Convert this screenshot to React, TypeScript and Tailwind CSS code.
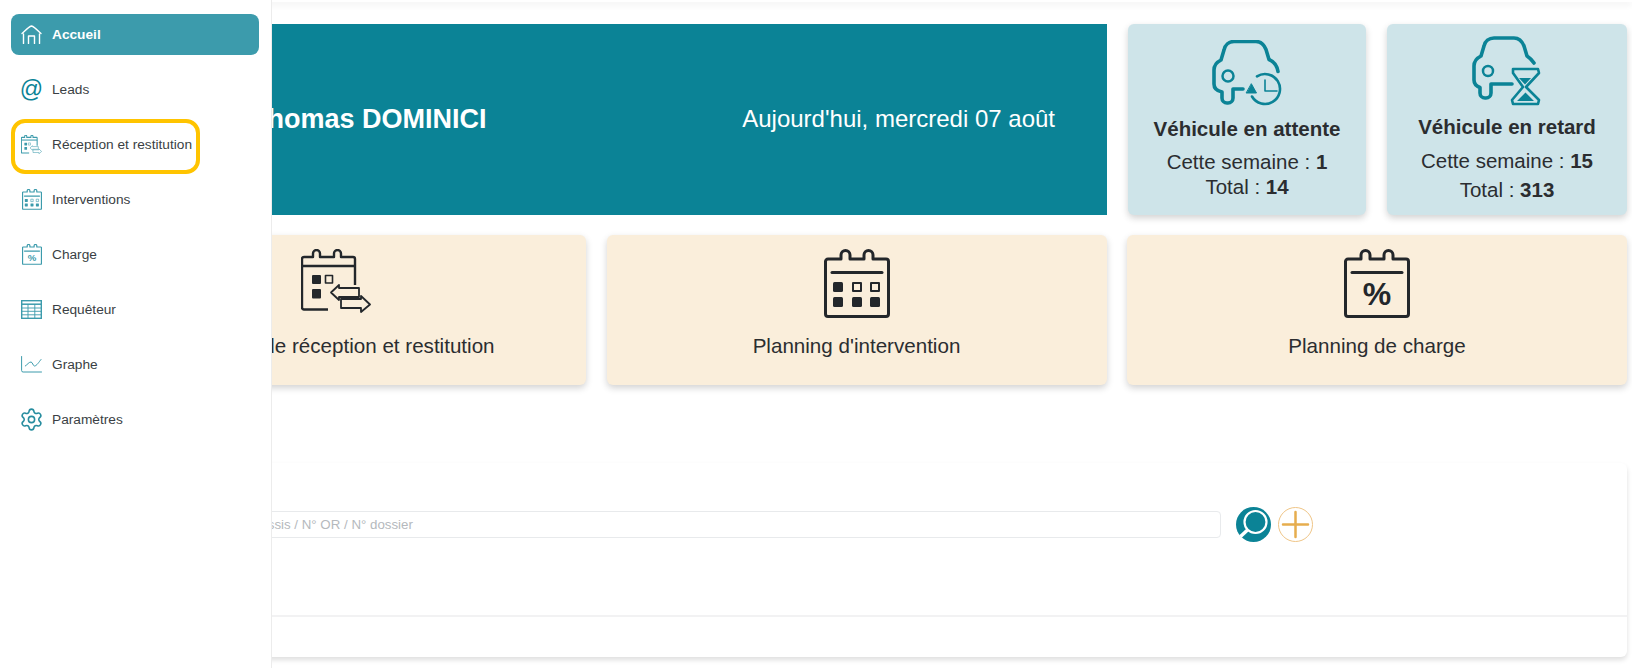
import type { ReactNode } from "react";
import { Settings } from "lucide-react";

const TEAL = "#0b8396";
const SIDE = "#3c9bac";
const INK = "#23272b";

type IconProps = { className?: string; stroke?: string; weight?: number };

function CalendarFrame({ stroke = INK, weight = 3, className, children }: IconProps & { children?: ReactNode }) {
  return (
    <svg viewBox="0 0 66 70" className={className} fill="none" stroke={stroke} strokeWidth={weight} strokeLinejoin="round">
      <path d="M4 10h13V6a4.5 4.5 0 0 1 9 0v4h14V6a4.5 4.5 0 0 1 9 0v4h13a2.5 2.5 0 0 1 2.500 2.500V65a2.500 2.500 0 0 1-2.500 2.500H4A2.500 2.500 0 0 1 1.500 65V12.500A2.500 2.500 0 0 1 4 10z" />
      <path d="M8 23.500h50" strokeLinecap="round" />
      {children}
    </svg>
  );
}

function InterventionIcon(props: IconProps) {
  const c = props.stroke ?? INK;
  return (
    <CalendarFrame {...props}>
      <rect x="9" y="33" width="10" height="10" rx="1.500" fill={c} stroke="none" />
      <rect x="29" y="34" width="8" height="8" strokeWidth="2" />
      <rect x="47" y="34" width="8" height="8" strokeWidth="2" />
      <rect x="9" y="48" width="10" height="10" rx="1.500" fill={c} stroke="none" />
      <rect x="28" y="48" width="10" height="10" rx="1.500" fill={c} stroke="none" />
      <rect x="46" y="48" width="10" height="10" rx="1.500" fill={c} stroke="none" />
    </CalendarFrame>
  );
}

function ChargeIcon(props: IconProps) {
  const c = props.stroke ?? INK;
  return (
    <CalendarFrame {...props}>
      <text x="33" y="56" textAnchor="middle" fontSize="32" fontWeight="700" fill={c} stroke="none">
        %
      </text>
    </CalendarFrame>
  );
}

function ReceptionIcon({ stroke = INK, weight = 2.4, className }: IconProps) {
  return (
    <svg viewBox="0 0 70 64" className={className} fill="none" stroke={stroke} strokeWidth={weight} strokeLinejoin="round">
      <path d="M27 60.500H3a2 2 0 0 1-2-2V10a2 2 0 0 1 2-2h9V4.500a3.500 3.500 0 0 1 7 0V8h14V4.500a3.500 3.500 0 0 1 7 0V8h12a2 2 0 0 1 2 2v26" />
      <path d="M1 17h53" />
      <rect x="11" y="26" width="9" height="9" rx="1" fill={stroke} stroke="none" />
      <rect x="24.500" y="26.500" width="7" height="7.500" strokeWidth="1.600" />
      <rect x="11" y="40" width="9" height="9.500" rx="1" fill={stroke} stroke="none" />
      <path d="M38 39v-3l-8 7.500 8 7.500v-3h20v-9z" strokeWidth="1.800" />
      <path d="M40 50h20v-3l9 8.500-9 7.500v-4H40z" strokeWidth="1.800" />
    </svg>
  );
}

function HomeIcon({ className }: IconProps) {
  return (
    <svg viewBox="0 0 21 19" className={className} fill="none" stroke="#fff" strokeWidth="1.400" strokeLinecap="round" strokeLinejoin="round">
      <path d="M1 8.500C4 6 7 2 10.500 1 14 2 17 6 20 8.500" />
      <path d="M2.500 9v9.500M18.500 9v9.500" />
      <path d="M7.500 18.500V11h6v7.500" />
    </svg>
  );
}

function TableIcon({ className }: IconProps) {
  return (
    <svg viewBox="0 0 21 19" className={className} fill="none" stroke={SIDE} strokeWidth="0.900">
      <rect x="0.700" y="0.700" width="19.600" height="17.600" strokeWidth="1.400" />
      <path d="M1 4.200h19" strokeWidth="1.500" />
      <path d="M1 8h19M1 11.300h19M1 14.800h19M7 4.200V18M13.800 4.200V18" />
    </svg>
  );
}

function GraphIcon({ className }: IconProps) {
  return (
    <svg viewBox="0 0 21 17" className={className} fill="none" stroke={SIDE} strokeWidth="1" strokeLinecap="round" strokeLinejoin="round">
      <path d="M0.600 0.500v14a1.500 1.500 0 0 0 1.500 1.500h18.400" />
      <path d="M4.300 10C6.500 8.500 8 6 10 6c1.500 0 2 4 3.500 4 2 0 4.500-4 6.500-6.500" />
    </svg>
  );
}

function CarClockIcon({ className }: IconProps) {
  return (
    <svg viewBox="0 0 70 66" className={className} fill="none" stroke={TEAL} strokeWidth="3.600" strokeLinecap="round" strokeLinejoin="round">
      <path d="M31 49H21v9a5 5 0 0 1-5 5h-1a5 5 0 0 1-5-5v-6C5 51 2 49 2 44V30c0-5 3-8 7-10l3-10c1-5 5-8.500 10-8.500h22c5 0 8 3 10 8l3 10c5 2 8 6 9 12" />
      <circle cx="16" cy="36" r="5.500" strokeWidth="2.500" />
      <path d="M40 56.500A15 15 0 1 0 45 36.300" strokeWidth="2.600" />
      <path d="M34.500 53h10l-5-9z" fill={TEAL} strokeWidth="1" />
      <path d="M53 40v11h12" strokeWidth="1.600" />
    </svg>
  );
}

function CarHourglassIcon({ className }: IconProps) {
  return (
    <svg viewBox="0 0 70 70" className={className} fill="none" stroke={TEAL} strokeWidth="3.600" strokeLinecap="round" strokeLinejoin="round">
      <path d="M40 48H19v9a5 5 0 0 1-5 5h-1a5 5 0 0 1-5-5v-5.500C4 50 2 48 2 44V30c0-5 3-8 7-10l3-10c1-5 5-8 10-8h20c5 0 8 3 10 8l3 10c3 2 5 4 7 7" />
      <circle cx="16" cy="35" r="5" strokeWidth="2.500" />
      <path d="M41 33h25l1 4-13 14 13 13-1 4H41l-1-4 11-13-10-14z" strokeWidth="2.600" />
      <path d="M47 42h12l-6 6.500zM45 65l8.500-8.500L62 65z" fill={TEAL} stroke="none" />
    </svg>
  );
}

function SearchButton() {
  return (
    <svg viewBox="0 0 35 35" className="h-[35px] w-[35px]">
      <circle cx="17.500" cy="17.500" r="17.500" fill={TEAL} />
      <circle cx="19.500" cy="15" r="11" fill="none" stroke="#fff" strokeWidth="2.200" />
      <path d="M11.500 23 4.500 29.500" stroke="#fff" strokeWidth="3.500" />
    </svg>
  );
}

function AddButton() {
  return (
    <svg viewBox="0 0 35 35" className="h-[35px] w-[35px]" fill="none" stroke="#e6ad4e">
      <circle cx="17.500" cy="17.500" r="17" strokeWidth="1" stroke="#efc587" />
      <path d="M5 17.500h25M17.500 5v25" strokeWidth="2.500" strokeLinecap="round" />
    </svg>
  );
}

function NavItem({ icon, label, active, boxed }: { icon: ReactNode; label: string; active?: boolean; boxed?: boolean }) {
  return (
    <div
      className={
        active
          ? "relative flex h-[41px] items-center rounded-lg bg-[#3c9bac] pl-[10px] text-[13.7px] font-bold text-white"
          : "relative flex h-[41px] items-center pl-[10px] text-[13.7px] text-[#3a3f44]"
      }
    >
      <span className="flex w-[21px] justify-center">{icon}</span>
      <span className="ml-[10px] whitespace-nowrap pt-[2px]">{label}</span>
      {boxed && (
        <span className="absolute left-0 top-[-5px] h-[55px] w-[189px] rounded-[14px] border-[4px] border-[#ffc400]" />
      )}
    </div>
  );
}

function Sidebar() {
  return (
    <aside className="absolute bottom-0 left-0 top-0 w-[272px] border-r border-[#ececec] bg-white pl-[11px] pr-[12px] pt-[14px]">
      <nav className="flex flex-col gap-[14px]">
        <NavItem active label="Accueil" icon={<HomeIcon className="h-[19px] w-[21px]" />} />
        <NavItem label="Leads" icon={<span className="text-[23px] leading-none text-[#0b8396]">@</span>} />
        <NavItem boxed label="Réception et restitution" icon={<ReceptionIcon stroke={SIDE} weight={3.5} className="h-[19px] w-[21px]" />} />
        <NavItem label="Interventions" icon={<InterventionIcon stroke={SIDE} weight={4} className="h-[21px] w-[20px]" />} />
        <NavItem label="Charge" icon={<ChargeIcon stroke={SIDE} weight={4} className="h-[21px] w-[20px]" />} />
        <NavItem label="Requêteur" icon={<TableIcon className="h-[19px] w-[21px]" />} />
        <NavItem label="Graphe" icon={<GraphIcon className="h-[17px] w-[21px]" />} />
        <NavItem label="Paramètres" icon={<Settings className="h-[25px] w-[25px] shrink-0" color="#278d9f" strokeWidth={1.5} />} />
      </nav>
    </aside>
  );
}

type StatCardProps = {
  box: string;
  titleGap: string;
  weekGap: string;
  totalGap: string;
  icon: ReactNode;
  title: string;
  week: string;
  total: string;
};

function StatCard({ box, titleGap, weekGap, totalGap, icon, title, week, total }: StatCardProps) {
  return (
    <div className={`${box} flex h-[191px] flex-col items-center rounded-md bg-[#cee4e9] text-[#2b2d30] shadow-[0_3px_7px_rgba(0,0,0,0.18)]`}>
      {icon}
      <p className={`${titleGap} text-[20.500px] font-bold leading-[24px]`}>{title}</p>
      <p className={`${weekGap} text-[20.500px] leading-[24px]`}>
        Cette semaine : <b>{week}</b>
      </p>
      <p className={`${totalGap} text-[20.500px] leading-[24px]`}>
        Total : <b>{total}</b>
      </p>
    </div>
  );
}

function Tile({ icon, label }: { icon: ReactNode; label: string }) {
  return (
    <div className="flex h-[150px] flex-col items-center rounded-md bg-[#faeedb] pt-[14px] shadow-[0_3px_7px_rgba(0,0,0,0.18)]">
      <div className="flex h-[70px] items-start">{icon}</div>
      <p className="mt-[15px] text-[20.600px] leading-[24px] text-[#2b2d30]">{label}</p>
    </div>
  );
}

export default function App() {
  return (
    <div className="relative h-[668px] w-[1632px] overflow-hidden bg-white font-['Liberation_Sans',Arial,sans-serif]">
      <div className="h-[2px] shadow-[0_2px_6px_rgba(0,0,0,0.12)]" />
      <main className="pl-[86px] pr-[5px] pt-[22px]">
        <div className="flex">
          <section className="flex h-[191px] w-[1021px] items-center justify-between bg-[#0b8396] pb-[1px] pl-[54px] pr-[52px] text-white">
            <h1 className="text-[27px] font-bold">Bonjour Thomas DOMINICI</h1>
            <p className="text-[24px]">Aujourd'hui, mercredi 07 août</p>
          </section>
          <div className="ml-[21px] flex gap-[21px]">
            <StatCard
              box="w-[238px] pt-[16px]"
              titleGap="mt-[11px]"
              weekGap="mt-[9px]"
              totalGap="mt-[1px]"
              icon={<CarClockIcon className="h-[66px] w-[70px]" />}
              title="Véhicule en attente"
              week="1"
              total="14"
            />
            <StatCard
              box="w-[240px] pt-[12px]"
              titleGap="mt-[9px]"
              weekGap="mt-[10px]"
              totalGap="mt-[5px]"
              icon={<CarHourglassIcon className="h-[70px] w-[70px]" />}
              title="Véhicule en retard"
              week="15"
              total="313"
            />
          </div>
        </div>

        <div className="mt-[20px] grid grid-cols-3 gap-[20.500px]">
          <Tile icon={<ReceptionIcon className="h-[64px] w-[70px]" />} label="Planning de réception et restitution" />
          <Tile icon={<InterventionIcon className="h-[70px] w-[66px]" />} label="Planning d'intervention" />
          <Tile icon={<ChargeIcon className="h-[70px] w-[66px]" />} label="Planning de charge" />
        </div>

        <section className="mt-[78px] h-[194px] rounded-md shadow-[0_3px_5px_rgba(0,0,0,0.13)]">
          <div className="h-[154px] border-b-2 border-[#f2f2f3] pt-[44px]">
            <div className="flex items-center">
              <input
                readOnly
                placeholder="Immatriculation / N° de châssis / N° OR / N° dossier"
                className="h-[27px] w-[1135px] rounded border border-[#e8eaec] bg-white pl-[21px] text-[13.300px] outline-none placeholder:text-[#b5b9bd]"
              />
              <div className="ml-[15px] flex gap-[7px]">
                <SearchButton />
                <AddButton />
              </div>
            </div>
          </div>
        </section>
      </main>
      <Sidebar />
    </div>
  );
}
